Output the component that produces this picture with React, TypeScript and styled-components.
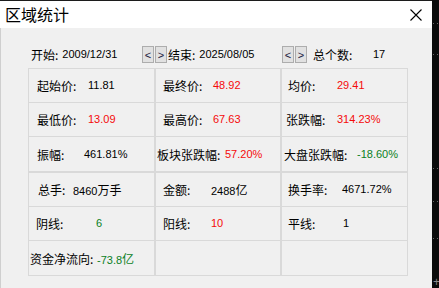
import React from "react";
import styled, { createGlobalStyle } from "styled-components";

const Global = createGlobalStyle`
  html, body { margin: 0; padding: 0; background: #0b0b0b; }
  body { width: 439px; height: 288px; overflow: hidden; }
  #root { display: flex; width: 439px; height: 288px; }
`;

const CJK = `"Noto Sans CJK SC", "Noto Sans CJK JP", sans-serif`;
const LATIN = `"Liberation Sans", "Noto Sans CJK SC", sans-serif`;

const Window = styled.div`
  width: 432px;
  height: 288px;
  box-sizing: border-box;
  border-top: 1px solid #1c1c1c;
  display: flex;
  flex-direction: column;
  background: #f0f0f0;
  flex-shrink: 0;
`;

const TitleBar = styled.div`
  height: 27px;
  background: #ffffff;
  display: flex;
  align-items: center;
  justify-content: space-between;
  padding: 0 10px 0 5px;
`;

const Title = styled.div`
  font-family: ${CJK};
  font-size: 16px;
  line-height: 27px;
  color: #000;
`;

const CloseIcon = styled.svg`
  width: 12px;
  height: 12px;
  display: block;
  margin-top: 1px;
`;

const Body = styled.div`
  flex: 1;
  border-left: 1px solid #cfcfcf;
  display: flex;
  flex-direction: column;
`;

const Toolbar = styled.div`
  margin-top: 18px;
  height: 17px;
  padding-left: 30px;
  display: flex;
  align-items: center;
`;

const Field = styled.div<{ $w: number; $ml?: number }>`
  width: ${(p) => p.$w}px;
  margin-left: ${(p) => p.$ml ?? 0}px;
  flex-shrink: 0;
  display: flex;
  align-items: center;
  white-space: nowrap;
  color: #000;
`;

const FieldLabel = styled.span<{ $w?: number }>`
  font-family: ${CJK};
  font-size: 12px;
  line-height: 17px;
  ${(p) => (p.$w ? `width: ${p.$w}px; flex-shrink: 0;` : "margin-right: 4px;")}
`;

const FieldValue = styled.span`
  font-family: ${LATIN};
  font-size: 11px;
  line-height: 17px;
`;

const NavGroup = styled.div`
  display: flex;
  gap: 1px;
  flex-shrink: 0;
`;

const NavButton = styled.button`
  width: 12px;
  height: 17px;
  padding: 0;
  margin: 0;
  box-sizing: border-box;
  border: 1px solid #adadad;
  background: #e1e1e1;
  font-family: ${LATIN};
  font-size: 11px;
  line-height: 14px;
  color: #1a1a40;
  display: flex;
  align-items: center;
  justify-content: center;
`;

const Tables = styled.div`
  margin-top: 5px;
  margin-left: 27px;
  display: flex;
  flex-direction: column;
`;

const Table = styled.div`
  display: grid;
  grid-template-columns: 127px 126px 125px;
  width: 380px;
  box-sizing: border-box;
  border: 1px solid #d9d9d9;
`;

const Cell = styled.div<{ $lx: number; $last: boolean; $bottom: boolean }>`
  height: 34px;
  box-sizing: border-box;
  border-right: ${(p) => (p.$last ? "none" : "2px solid #d9d9d9")};
  border-bottom: ${(p) => (p.$bottom ? "none" : "1px solid #d9d9d9")};
  padding-left: ${(p) => p.$lx}px;
  display: flex;
  align-items: center;
  white-space: nowrap;
  padding-bottom: ${(p) => (p.$bottom ? 0 : 1)}px;
`;

const Label = styled.span<{ $w: number }>`
  width: ${(p) => p.$w}px;
  flex-shrink: 0;
  font-family: ${CJK};
  font-size: 12px;
  color: #000;
`;

const tone = { black: "#000000", red: "#f50a0a", green: "#0a7f24" } as const;
type Tone = keyof typeof tone;

const Value = styled.span<{ $tone: Tone }>`
  font-family: ${LATIN};
  font-size: 11px;
  color: ${(p) => tone[p.$tone]};
`;

const Unit = styled.span`
  font-family: ${CJK};
  font-size: 12px;
`;

const Side = styled.div`
  flex: 1;
  display: flex;
  flex-direction: column;
  align-items: stretch;
  position: relative;
  overflow: hidden;
`;

const DotRow = styled.div<{ $mt: number }>`
  margin-top: ${(p) => p.$mt}px;
  height: 1px;
  display: flex;
  gap: 3px;
  padding-left: 1px;
  &::before, &::after {
    content: "";
    width: 1px;
    height: 1px;
    background: #6a6a6a;
  }
`;

const SideRule = styled.div<{ $mt: number }>`
  margin-top: ${(p) => p.$mt}px;
  height: 1px;
  background: #3a3a3a;
`;

const SidePlus = styled.div`
  margin-top: 2px;
  padding-left: 1px;
  font-family: ${LATIN};
  font-size: 12px;
  line-height: 12px;
  color: #8a8a8a;
`;

type CellData = { label?: string; value?: string; unit?: string; tone?: Tone; lx: number; vx: number };

const table1: CellData[][] = [
  [
    { label: "起始价:", value: "11.81", tone: "black", lx: 8, vx: 59 },
    { label: "最终价:", value: "48.92", tone: "red", lx: 7, vx: 57 },
    { label: "均价:", value: "29.41", tone: "red", lx: 6, vx: 55 },
  ],
  [
    { label: "最低价:", value: "13.09", tone: "red", lx: 8, vx: 59 },
    { label: "最高价:", value: "67.63", tone: "red", lx: 7, vx: 57 },
    { label: "张跌幅:", value: "314.23%", tone: "red", lx: 4, vx: 55 },
  ],
  [
    { label: "振幅:", value: "461.81%", tone: "black", lx: 8, vx: 55 },
    { label: "板块张跌幅:", value: "57.20%", tone: "red", lx: 1, vx: 69 },
    { label: "大盘张跌幅:", value: "-18.60%", tone: "green", lx: 2, vx: 75 },
  ],
];

const table2: CellData[][] = [
  [
    { label: "总手:", value: "8460", unit: "万手", tone: "black", lx: 9, vx: 44 },
    { label: "金额:", value: "2488", unit: "亿", tone: "black", lx: 7, vx: 55 },
    { label: "换手率:", value: "4671.72%", tone: "black", lx: 6, vx: 60 },
  ],
  [
    { label: "阴线:", value: "6", tone: "green", lx: 7, vx: 67 },
    { label: "阳线:", value: "10", tone: "red", lx: 7, vx: 55 },
    { label: "平线:", value: "1", tone: "black", lx: 6, vx: 61 },
  ],
  [
    { label: "资金净流向:", value: "-73.8", unit: "亿", tone: "green", lx: 1, vx: 68 },
    { lx: 0, vx: 0 },
    { lx: 0, vx: 0 },
  ],
];

function StatTable({ rows }: { rows: CellData[][] }) {
  return (
    <Table>
      {rows.map((row, r) =>
        row.map((c, i) => (
          <Cell key={`${r}-${i}`} $lx={c.lx} $last={i === 2} $bottom={r === rows.length - 1}>
            {c.label && <Label $w={c.vx - c.lx}>{c.label}</Label>}
            {c.value && (
              <Value $tone={c.tone ?? "black"}>
                {c.value}
                {c.unit && <Unit>{c.unit}</Unit>}
              </Value>
            )}
          </Cell>
        ))
      )}
    </Table>
  );
}

function Nav() {
  return (
    <NavGroup>
      <NavButton>&lt;</NavButton>
      <NavButton>&gt;</NavButton>
    </NavGroup>
  );
}

export default function App() {
  return (
    <>
      <Global />
      <Window>
        <TitleBar>
          <Title>区域统计</Title>
          <CloseIcon viewBox="0 0 12 12">
            <path d="M0.5 0.5 L11.5 11.5 M11.5 0.5 L0.5 11.5" stroke="#000" strokeWidth="1.1" fill="none" />
          </CloseIcon>
        </TitleBar>
        <Body>
          <Toolbar>
            <Field $w={111}>
              <FieldLabel>开始:</FieldLabel>
              <FieldValue>2009/12/31</FieldValue>
            </Field>
            <Nav />
            <Field $w={114} $ml={1}>
              <FieldLabel>结束:</FieldLabel>
              <FieldValue>2025/08/05</FieldValue>
            </Field>
            <Nav />
            <Field $w={80} $ml={6}>
              <FieldLabel $w={60}>总个数:</FieldLabel>
              <FieldValue>17</FieldValue>
            </Field>
          </Toolbar>
          <Tables>
            <StatTable rows={table1} />
            <StatTable rows={table2} />
          </Tables>
        </Body>
      </Window>
      <Side>
        <DotRow $mt={23} />
        <DotRow $mt={30} />
        <DotRow $mt={113} />
        <DotRow $mt={32} />
        <DotRow $mt={36} />
        <SideRule $mt={35} />
        <SidePlus>+</SidePlus>
      </Side>
    </>
  );
}
